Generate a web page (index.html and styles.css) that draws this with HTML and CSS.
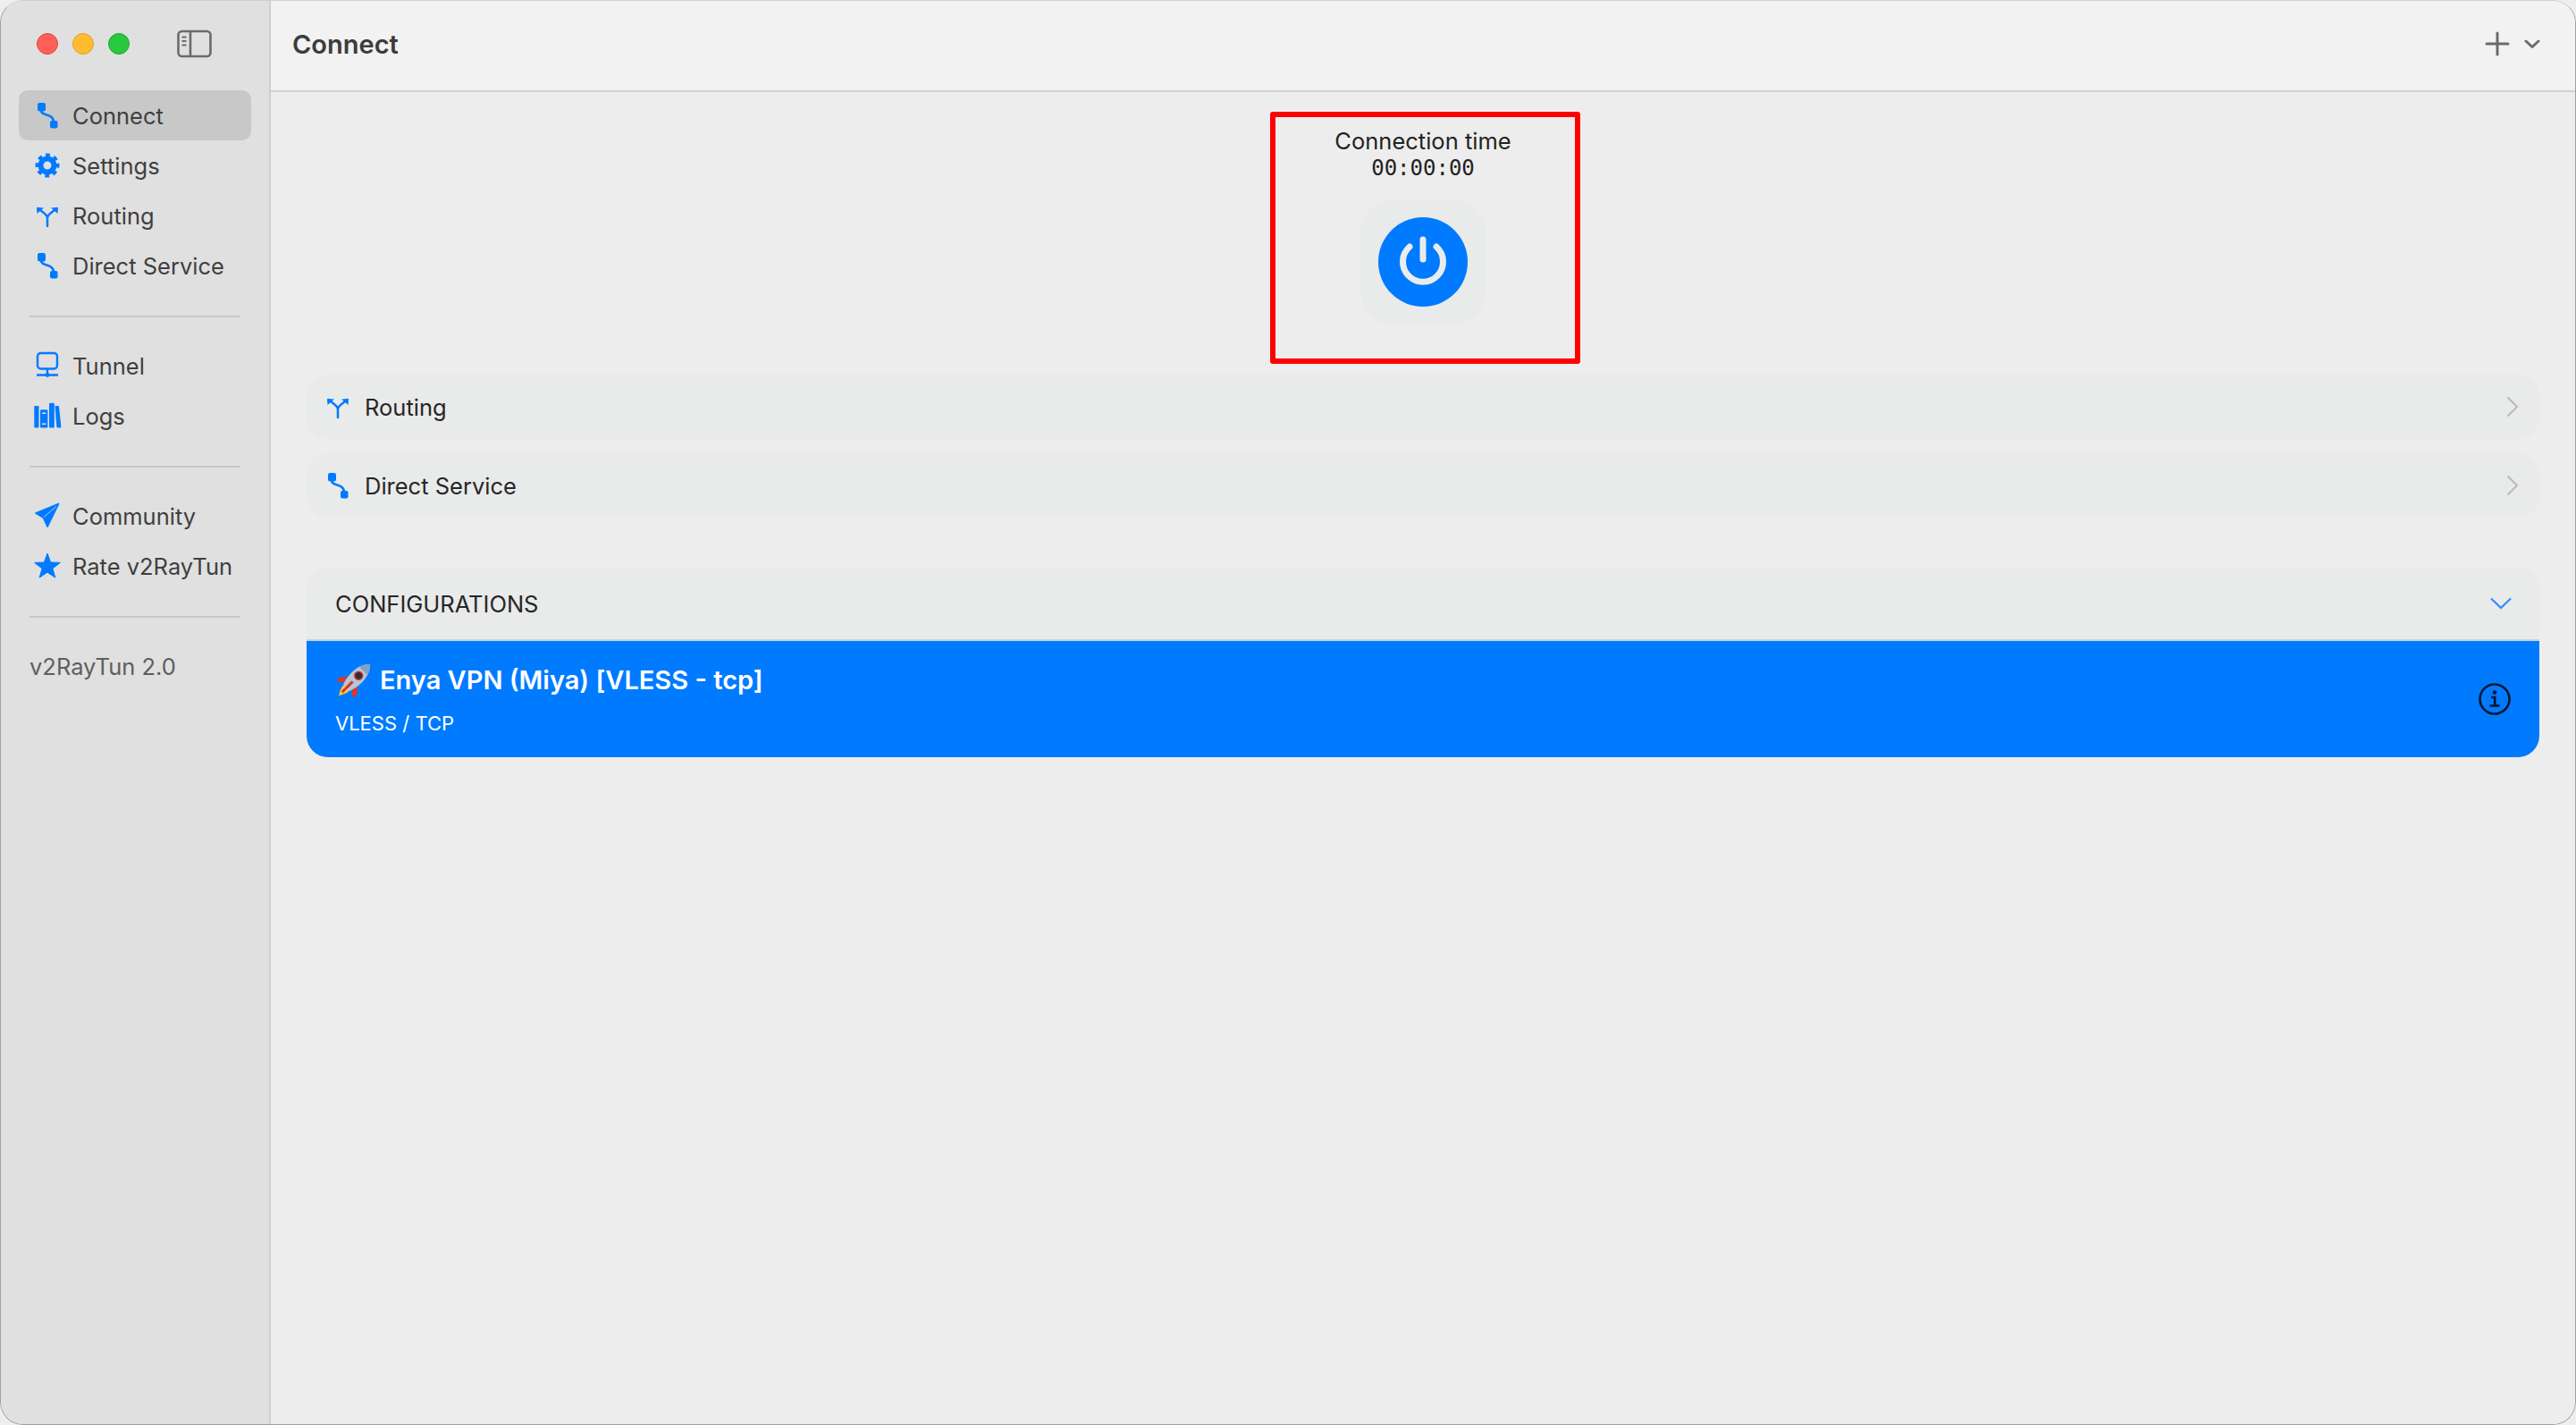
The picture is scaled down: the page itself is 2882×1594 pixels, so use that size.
FILE: index.html
```html
<!DOCTYPE html>
<html lang="en">
<head>
    <meta charset="UTF-8">
    <meta name="viewport" content="width=device-width, initial-scale=1.0">
    <title>v2RayTun</title>
    <link rel="stylesheet" href="styles.css">
</head>
<body>
    <svg class="defs" width="0" height="0">
        <symbol id="i-connect" viewBox="0 0 36 36">
            <rect x="7" y="4" width="9" height="9.5" rx="2.2" fill="#007aff"/>
            <rect x="21" y="24" width="8.5" height="8.5" rx="2" fill="#007aff"/>
            <path d="M11 12C11 20 25 15 25 26" fill="none" stroke="#007aff" stroke-width="2.6"/>
        </symbol>
        <symbol id="i-routing" viewBox="0 0 36 36">
            <path d="M18 30V21C18 16 12 15 8 10M18 21C18 16 24 15 28 10" fill="none" stroke="#007aff" stroke-width="2.5" stroke-linecap="round"/>
            <polygon points="6,9 14,9.5 6.5,16" fill="#007aff"/>
            <polygon points="30,9 22,9.5 29.5,16" fill="#007aff"/>
        </symbol>
    </svg>

    <div class="window">
        <aside class="sidebar">
            <div class="titlebar">
                <span class="light red"></span>
                <span class="light yellow"></span>
                <span class="light green"></span>
                <svg class="toggle" width="40" height="32" viewBox="0 0 40 32" fill="none" stroke="#6b6b6b" stroke-width="2.6">
                    <rect x="1.5" y="2" width="36" height="28" rx="4"/>
                    <path d="M15 2V30"/>
                    <path d="M5.500 8.500H10.500M5.500 13H10.500M5.500 17.500H10.500" stroke-width="1.800"/>
                </svg>
            </div>

            <nav class="nav-group">
                <a class="nav-item active">
                    <svg class="icon"><use href="#i-connect"/></svg>
                    <span>Connect</span>
                </a>
                <a class="nav-item">
                    <svg class="icon" viewBox="0 0 36 36" fill="none" stroke="#007aff">
                        <circle cx="18" cy="18" r="7.500" stroke-width="6"/>
                        <circle cx="18" cy="18" r="11.500" stroke-width="4" stroke-dasharray="4.700 4.330" transform="rotate(-11 18 18)"/>
                    </svg>
                    <span>Settings</span>
                </a>
                <a class="nav-item">
                    <svg class="icon"><use href="#i-routing"/></svg>
                    <span>Routing</span>
                </a>
                <a class="nav-item">
                    <svg class="icon"><use href="#i-connect"/></svg>
                    <span>Direct Service</span>
                </a>
            </nav>
            <hr class="nav-line">

            <nav class="nav-group">
                <a class="nav-item">
                    <svg class="icon" viewBox="0 0 36 36" fill="none" stroke="#007aff" stroke-width="2.400">
                        <rect x="7" y="4" width="22" height="17.500" rx="3.500"/>
                        <path d="M18 21.500V28M6 28.500H30"/>
                        <circle cx="18" cy="28.500" r="2.400" fill="#007aff" stroke="none"/>
                    </svg>
                    <span>Tunnel</span>
                </a>
                <a class="nav-item">
                    <svg class="icon" viewBox="0 0 36 36" fill="#007aff">
                        <rect x="3.300" y="7" width="5.200" height="24.500" rx="1.200"/>
                        <rect x="10" y="11.300" width="8.400" height="20.200" rx="1.200"/>
                        <rect x="20" y="3.700" width="5.800" height="27.800" rx="1.200"/>
                        <path d="M26.500 7H30.300C30.800 7 31 7.300 31 7.700L33.400 30.300C33.500 31 33.100 31.500 32.500 31.500H29.500C28.900 31.500 28.500 31 28.400 30.500Z"/>
                        <rect x="12" y="14.500" width="4.400" height="1.500" fill="#e0e0e0"/>
                        <rect x="12" y="26.500" width="4.400" height="1.500" fill="#e0e0e0"/>
                    </svg>
                    <span>Logs</span>
                </a>
            </nav>
            <hr class="nav-line">

            <nav class="nav-group">
                <a class="nav-item">
                    <svg class="icon" viewBox="0 0 36 36">
                        <path d="M5 15L30.500 4.500L18 30L13.500 20Z" fill="#007aff" stroke="#007aff" stroke-width="1.800" stroke-linejoin="round"/>
                        <path d="M14 19.500L28 7.500" stroke="#cfe2f7" stroke-width="0.800"/>
                    </svg>
                    <span>Community</span>
                </a>
                <a class="nav-item">
                    <svg class="icon" viewBox="0 0 36 36">
                        <polygon points="18,4 21.600,14 32.300,14.400 23.900,20.900 26.800,31.100 18,25.200 9.200,31.100 12.100,20.900 3.700,14.400 14.400,14" fill="#007aff" stroke="#007aff" stroke-width="1" stroke-linejoin="round"/>
                    </svg>
                    <span>Rate v2RayTun</span>
                </a>
            </nav>
            <hr class="nav-line">

            <div class="version">v2RayTun 2.0</div>
        </aside>

        <main class="main">
            <header class="topbar">
                <h1>Connect</h1>
                <div class="topbar-actions">
                    <svg width="28" height="28" viewBox="0 0 28 28" fill="none" stroke="#6b6b6b" stroke-width="3" stroke-linecap="round">
                        <path d="M14 2V26M2 14H26"/>
                    </svg>
                    <svg width="18" height="12" viewBox="0 0 18 12" fill="none" stroke="#6b6b6b" stroke-width="3" stroke-linecap="round" stroke-linejoin="round">
                        <path d="M2 3L9 9.500L16 3"/>
                    </svg>
                </div>
            </header>

            <div class="content">
                <section class="connection">
                    <div class="conn-label">Connection time</div>
                    <div class="conn-time">00:00:00</div>
                    <div class="power-tile">
                        <svg class="power" width="100" height="100" viewBox="0 0 100 100" fill="none" stroke="#e9ecec" stroke-width="7" stroke-linecap="round">
                            <circle cx="50" cy="50" r="50" fill="#007aff" stroke="none"/>
                            <path d="M35 33A22.500 22.500 0 1 0 65 33"/>
                            <path d="M50 25V47"/>
                        </svg>
                    </div>
                </section>

                <a class="link-row">
                    <svg class="icon"><use href="#i-routing"/></svg>
                    <span class="link-text">Routing</span>
                    <svg class="chevron" width="14" height="24" viewBox="0 0 14 24" fill="none" stroke="#bcbcbc" stroke-width="2.200">
                        <path d="M1.500 1.500L12 12L1.500 22.500"/>
                    </svg>
                </a>
                <a class="link-row">
                    <svg class="icon"><use href="#i-connect"/></svg>
                    <span class="link-text">Direct Service</span>
                    <svg class="chevron" width="14" height="24" viewBox="0 0 14 24" fill="none" stroke="#bcbcbc" stroke-width="2.200">
                        <path d="M1.500 1.500L12 12L1.500 22.500"/>
                    </svg>
                </a>

                <section class="configs">
                    <div class="configs-head">
                        <span>CONFIGURATIONS</span>
                        <svg width="24" height="14" viewBox="0 0 24 14" fill="none" stroke="#3388ff" stroke-width="2.200">
                            <path d="M1 1.500L12 12L23 1.500"/>
                        </svg>
                    </div>
                    <div class="config-item">
                        <div class="config-info">
                            <div class="config-title">
                                <svg class="rocket" width="40" height="40" viewBox="0 0 38 38">
                                    <g transform="rotate(45 19 19)">
                                        <path d="M11.500 21L6 28L7 33L13 28Z" fill="#e8321f"/>
                                        <path d="M26.500 21L32 28L31 33L25 28Z" fill="#e8321f"/>
                                        <path d="M15 29C14 34 17 38 19 42C21 38 24 34 23 29Z" fill="#ffc52e"/>
                                        <path d="M17 29C16.500 33 18 35 19 38C20 35 21.500 33 21 29Z" fill="#fff2b0"/>
                                        <path d="M19 -5C25 0 27 9 26.500 18C26.300 23 25 27 24 30H14C13 27 11.700 23 11.500 18C11 9 13 0 19 -5Z" fill="#b9c5d2"/>
                                        <path d="M19 -5C22 -2.500 24 1 25 5H13C14 1 16 -2.500 19 -5Z" fill="#7fa3c7"/>
                                        <circle cx="19" cy="12" r="5" fill="#d9362a"/>
                                        <circle cx="19" cy="12" r="3.500" fill="#2a2f3a"/>
                                        <path d="M17.500 21H20.500V36L19 37.500L17.500 36Z" fill="#d9362a"/>
                                    </g>
                                </svg>
                                <span>Enya VPN (Miya) [VLESS - tcp]</span>
                            </div>
                            <div class="config-sub">VLESS / TCP</div>
                        </div>
                        <svg class="info" width="38" height="38" viewBox="0 0 38 38" fill="none" stroke="#07152e" stroke-width="2.600">
                            <circle cx="19" cy="19" r="16.500"/>
                            <circle cx="19" cy="11.500" r="2.200" fill="#07152e" stroke="none"/>
                            <path d="M15 17H19.200V26.500M13.500 26.500H24.500"/>
                        </svg>
                    </div>
                </section>
            </div>
        </main>
    </div>
</body>
</html>
```

FILE: styles.css
```css
* {
    box-sizing: border-box;
}
html, body {
    height: 100%;
}
body {
    margin: 0;
    background: #eeeeee;
    font-family: Inter, "Liberation Sans", sans-serif;
    font-size: 25.5px;
    color: #262626;
}
.defs {
    display: block;
    height: 0;
}
.window {
    display: flex;
    height: 100%;
    border: 1px solid #a0a0a0;
    border-top-color: #d0d0d0;
    border-radius: 26px;
    overflow: hidden;
}

/* sidebar */
.sidebar {
    width: 302px;
    flex-shrink: 0;
    background: #e0e0e0;
    border-right: 2px solid #cfcfcf;
    padding: 0 20px;
}
.titlebar {
    display: flex;
    align-items: center;
    gap: 16px;
    height: 100px;
    padding-left: 20px;
    padding-bottom: 4px;
}
.light {
    width: 24px;
    height: 24px;
    border-radius: 50%;
}
.red {
    background: #ff5f57;
    border: 1px solid #e0443e;
}
.yellow {
    background: #febc2e;
    border: 1px solid #dea123;
}
.green {
    background: #28c840;
    border: 1px solid #1aab29;
}
.toggle {
    margin-left: 37px;
}
.nav-item {
    display: flex;
    align-items: center;
    gap: 10px;
    height: 56px;
    padding-left: 14px;
    border-radius: 10px;
    color: #3f3f3f;
}
.nav-item.active {
    background: #c8c8c8;
}
.icon {
    width: 36px;
    height: 36px;
    flex-shrink: 0;
}
.nav-line {
    height: 2px;
    margin: 28px 12px 26px;
    border: none;
    background: #c8c8c8;
}
.version {
    margin: 39px 12px 0;
    line-height: 32px;
    color: #5e5e5e;
}

/* main area */
.main {
    flex: 1;
    display: flex;
    flex-direction: column;
    min-width: 0;
    background: #ededed;
}
.topbar {
    display: flex;
    align-items: center;
    justify-content: space-between;
    height: 102px;
    padding: 0 39px 4px 24px;
    background: #f2f2f2;
    border-bottom: 2px solid #d2d2d2;
}
.topbar h1 {
    margin: 0;
    font-size: 29px;
    font-weight: 600;
    color: #3c3c3c;
}
.topbar-actions {
    display: flex;
    align-items: center;
    gap: 16px;
}
.content {
    padding: 22px 40px 0;
}

/* the marked box round the timer, drawn a little right of centre */
.connection {
    display: flex;
    flex-direction: column;
    align-items: center;
    width: 347px;
    height: 282px;
    margin: 0 0 12px calc(50% - 171px);
    padding: 11px 5px 0 0;
    border: 6px solid #ff0000;
    border-radius: 3px;
    color: #222222;
}
.conn-label {
    line-height: 32px;
}
.conn-time {
    font-family: "DejaVu Sans Mono", monospace;
    font-size: 24px;
    line-height: 29px;
}
.power-tile {
    display: flex;
    align-items: center;
    justify-content: center;
    width: 140px;
    height: 140px;
    margin-top: 20px;
    border-radius: 36px;
    background: #e9eaea;
}

.link-row {
    display: flex;
    align-items: center;
    gap: 12px;
    height: 72px;
    margin-bottom: 16px;
    padding: 0 23px 0 17px;
    border-radius: 24px;
    background: #e9eaea;
}
.link-text {
    flex: 1;
}
.configs {
    margin-top: 56px;
    border-radius: 24px;
    overflow: hidden;
}
.configs-head {
    display: flex;
    align-items: center;
    justify-content: space-between;
    height: 82px;
    padding: 0 31px 0 32px;
    background: #e9eaea;
    border-bottom: 2px solid #d0d2d2;
}
.config-item {
    display: flex;
    align-items: center;
    justify-content: space-between;
    height: 130px;
    padding: 0 31px 0 30px;
    background: #007aff;
    color: #ffffff;
}
.config-title {
    display: flex;
    align-items: center;
    gap: 9px;
    font-size: 29px;
    font-weight: 600;
    line-height: 38px;
}
.rocket {
    margin-left: 3px;
}
.config-sub {
    margin: 14px 0 0 2px;
    font-size: 22px;
    line-height: 28px;
}
```
